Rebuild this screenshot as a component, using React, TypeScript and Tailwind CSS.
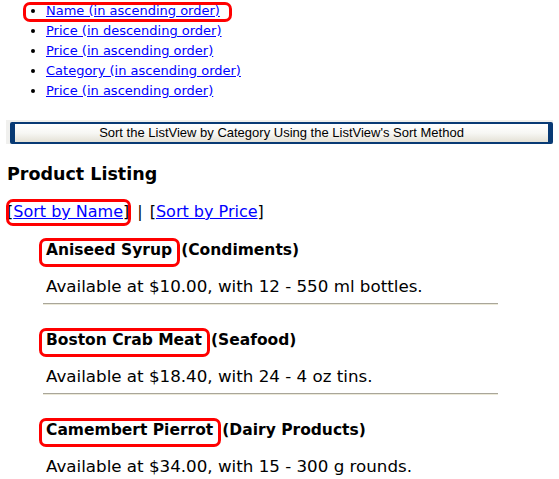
const sortLinks = [
  "Name (in ascending order)",
  "Price (in descending order)",
  "Price (in ascending order)",
  "Category (in ascending order)",
  "Price (in ascending order)",
];

const products = [
  { name: "Aniseed Syrup", category: "Condiments", price: "10.00", qty: "12 - 550 ml bottles" },
  { name: "Boston Crab Meat", category: "Seafood", price: "18.40", qty: "24 - 4 oz tins" },
  { name: "Camembert Pierrot", category: "Dairy Products", price: "34.00", qty: "15 - 300 g rounds" },
];

function Callout({ className }: { className: string }) {
  return (
    <span
      className={`pointer-events-none absolute rounded-[7px] border-[3px] border-[#ff0000] ${className}`}
    />
  );
}

export default function App() {
  return (
    <div className="w-[559px] h-[479px] overflow-hidden bg-white text-black font-['DejaVu_Sans',Verdana,sans-serif]">
      {/* Sort options */}
      <ul className="list-disc pl-[46px] pt-[1px] text-[13px] leading-[20px] marker:text-black">
        {sortLinks.map((label, i) => (
          <li key={i}>
            <span className="relative">
              <a href="#" className="text-[#0000ff] underline">
                {label}
              </a>
              {i === 0 && <Callout className="-left-[23px] -right-[12px] -top-[1px] -bottom-[4px]" />}
            </span>
          </li>
        ))}
      </ul>

      {/* Sort button */}
      <div className="mt-[19px] pl-[6px]">
        <div className="bg-[#f0f0ee] pl-[4px] w-[547px]">
          <button className="w-[543px] h-[22px] border-x-[5px] border-y-[2px] border-[#083a74] rounded-[2px] bg-gradient-to-b from-white via-[#f7f7f4] to-[#e4e1d6] font-['Liberation_Sans',Arial,sans-serif] text-[13px] leading-[18px] text-black">
            Sort the ListView by Category Using the ListView's Sort Method
          </button>
        </div>
      </div>

      {/* Listing */}
      <div className="pl-[7px]">
        <h2 className="mt-[18px] text-[17.5px] leading-[24px] font-bold">Product Listing</h2>

        <p className="mt-[14px] text-[16px] leading-[24px]">
          <span className="relative">
            [<a href="#" className="text-[#0000ff] underline">Sort by Name</a>]
            <Callout className="-left-[1px] -right-[2px] -top-[3px] -bottom-[5px]" />
          </span>
          <span className="ml-[8px]">|</span>
          <span className="ml-[7px]">[</span>
          <a href="#" className="text-[#0000ff] underline">Sort by Price</a>]
        </p>

        <div className="pl-[39px]">
          {products.map((p, i) => (
            <div key={p.name} className="w-[452px]">
              <div className={`${i === 0 ? "mt-[14px]" : "mt-[23px]"} text-[15.5px] leading-[24px] font-bold`}>
                <span className="relative">
                  {p.name}
                  <Callout className="-left-[7px] -right-[8px] -top-[3px] -bottom-[8px]" />
                </span>
                <span className="ml-[9px]">({p.category})</span>
              </div>
              <div className="mt-[12px] text-[16.7px] leading-[24px]">
                Available at ${p.price}, with {p.qty}.
              </div>
              {i < products.length - 1 && (
                <hr className="mt-[5px] -ml-[3px] w-[455px] border-t border-t-[#a9a69a] border-b border-b-[#ece9d8]" />
              )}
            </div>
          ))}
        </div>
      </div>
    </div>
  );
}
